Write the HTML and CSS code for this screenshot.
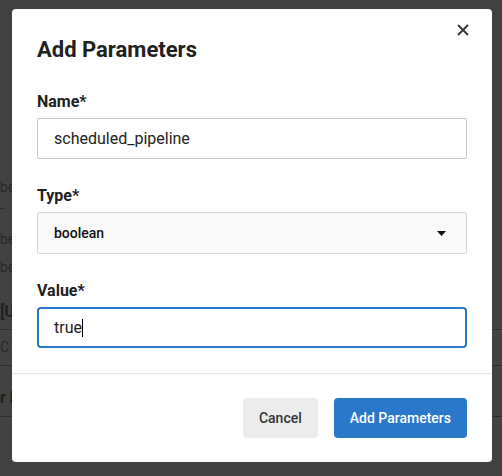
FILE: index.html
```html
<!DOCTYPE html>
<html>
<head>
<meta charset="utf-8">
<link rel="stylesheet" href="styles.css">
</head>
<body>
<div class="page">
  <p class="bg-line l1">be</p>
  <p class="bg-line l2">-</p>
  <p class="bg-line l3">be</p>
  <p class="bg-line l4">be</p>
  <p class="bg-line bold l5">[U</p>
  <div class="bg-rule r1"></div>
  <p class="bg-line l6">C</p>
  <div class="bg-rule r2"></div>
  <p class="bg-line bold l7">r l</p>
  <div class="bg-rule r3"></div>
</div>
<div class="overlay">
  <div class="modal">
    <button class="close" aria-label="Close">
      <svg width="12" height="12" viewBox="0 0 12 12"><path d="M1 1L11 11M11 1L1 11" stroke="#333" stroke-width="1.8" fill="none"/></svg>
    </button>
    <div class="modal-body">
      <h2 class="title">Add Parameters</h2>
      <div class="field">
        <label class="label">Name*</label>
        <div class="input">scheduled_pipeline</div>
      </div>
      <div class="field">
        <label class="label">Type*</label>
        <div class="select"><span>boolean</span><svg width="9" height="5" viewBox="0 0 9 5"><path d="M0 0H9L4.5 5Z" fill="#111"/></svg></div>
      </div>
      <div class="field last">
        <label class="label">Value*</label>
        <div class="input focused">true<span class="cursor"></span></div>
      </div>
    </div>
    <div class="modal-footer">
      <button class="btn btn-cancel">Cancel</button>
      <button class="btn btn-primary">Add Parameters</button>
    </div>
  </div>
</div>
</body>
</html>
```
FILE: styles.css
```css
* { box-sizing: border-box; }
html, body { margin: 0; padding: 0; }
body {
  width: 502px;
  height: 476px;
  overflow: hidden;
  background: #fff;
  font-family: Roboto, "Liberation Sans", sans-serif;
  position: relative;
}
.page { padding-top: 178px; }
.bg-line {
  margin: 0;
  font-size: 14px;
  line-height: 18px;
  color: #999;
  white-space: nowrap;
}
.bg-line.bold { font-weight: 700; font-size: 16px; color: #777; }
.l2 { margin-top: 3px; }
.l3 { margin-top: 13px; }
.l4 { margin-top: 10px; }
.l5 { margin-top: 27px; }
.bg-rule { height: 1px; background: #bbb; width: 100%; }
.r1 { margin-top: 8px; }
.l6 { margin-top: 8px; }
.r2 { margin-top: 9px; }
.l7 { margin-top: 23px; }
.r3 { margin-top: 9px; }

.overlay {
  position: absolute;
  inset: 0;
  background: rgba(0, 0, 0, 0.74);
  padding: 9px 0 0 12px;
}
.modal {
  position: relative;
  width: 480px;
  background: #fff;
  border-radius: 4px;
  color: #212121;
}
.close {
  position: absolute;
  top: 15px;
  right: 23px;
  width: 12px;
  height: 12px;
  padding: 0;
  border: 0;
  background: none;
  display: block;
}
.close svg { display: block; }
.modal-body { padding: 28px 25px 25px; }
.title {
  margin: 0 0 29px;
  font-size: 22px;
  line-height: 26px;
  font-weight: 700;
}
.field { margin-bottom: 27px; }
.field.last { margin-bottom: 0; }
.label {
  display: block;
  font-size: 16px;
  line-height: 19px;
  font-weight: 700;
  margin-bottom: 7px;
}
.input {
  height: 41px;
  border: 1px solid #c6c6c6;
  border-radius: 2px;
  padding: 0 16px;
  font-size: 16px;
  display: flex;
  align-items: center;
  color: #222;
}
.input.focused {
  border: 2px solid #2b78cb;
  border-radius: 4px;
  padding: 0 15px;
  height: 41px;
}
.cursor {
  display: inline-block;
  width: 1px;
  height: 18px;
  background: #000;
  margin-left: 0;
}
.select {
  height: 42px;
  border: 1px solid #d4d4d4;
  background: #fafafa;
  border-radius: 2px;
  padding: 0 20px 0 16px;
  display: flex;
  align-items: center;
  justify-content: space-between;
  font-size: 14px;
  font-weight: 500;
  color: #111;
}
.select svg { display: block; }
.modal-footer {
  border-top: 1px solid #e3e3e3;
  padding: 24px 25px 24px;
  display: flex;
  justify-content: flex-end;
  gap: 16px;
}
.btn {
  height: 40px;
  padding: 0 16px;
  border: 0;
  border-radius: 4px;
  font-family: Roboto, "Liberation Sans", sans-serif;
  font-size: 14px;
  font-weight: 500;
}
.btn-cancel { background: #ececec; color: #333; }
.btn-primary { background: #2b78cb; color: #fff; }
```
